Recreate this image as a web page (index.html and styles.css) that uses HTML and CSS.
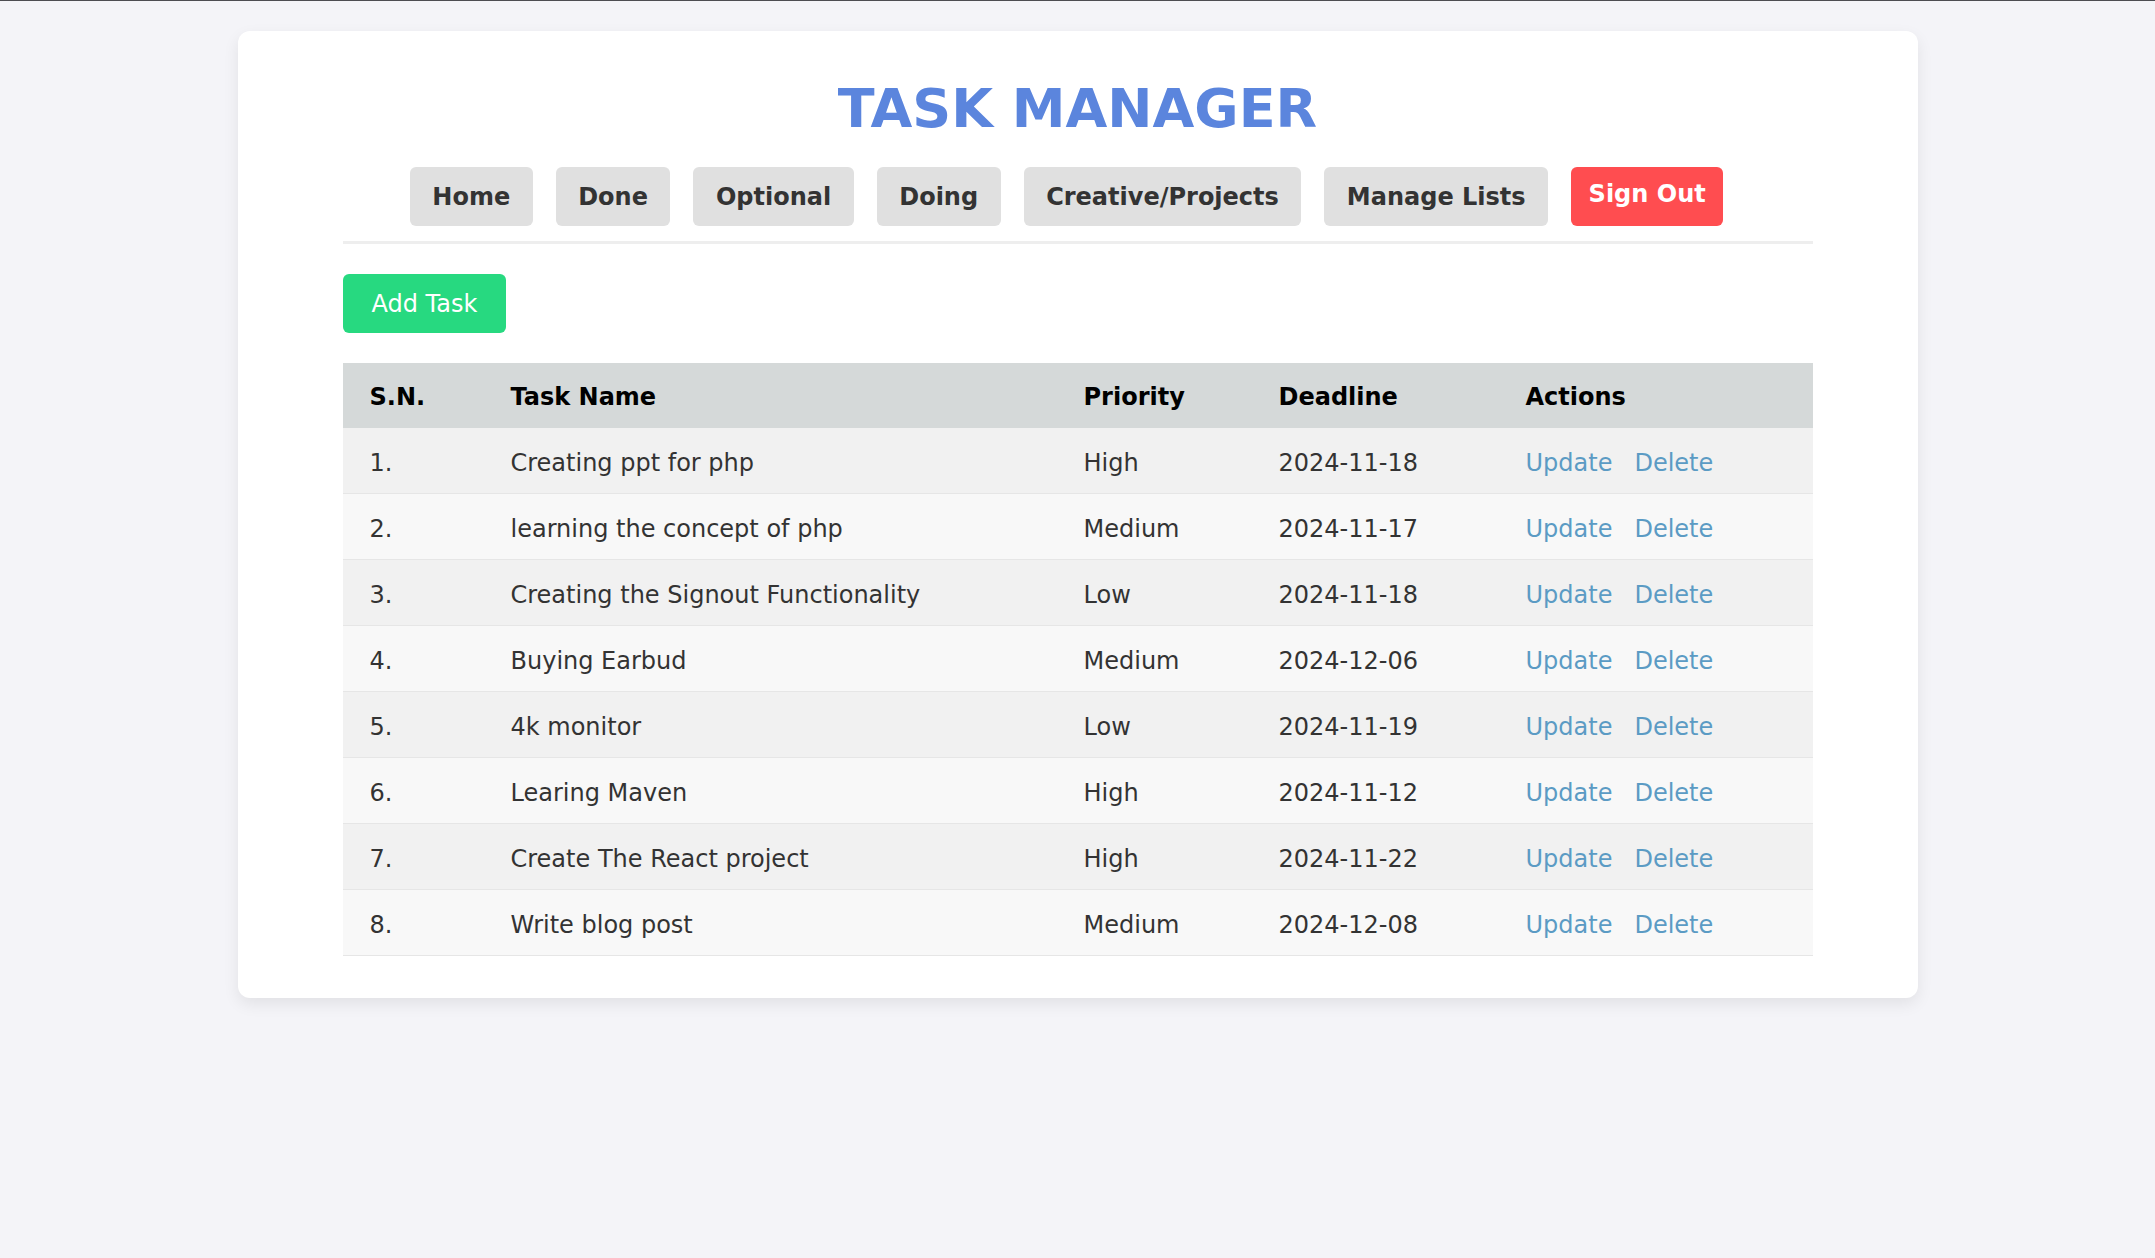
FILE: index.html
```html
<!DOCTYPE html>
<html lang="en">
<head>
<meta charset="utf-8">
<title>Task Manager</title>
<link rel="stylesheet" href="styles.css">
</head>
<body>
<div class="card">
  <h1 class="title">TASK MANAGER</h1>
  <nav class="menu">
    <a class="menu-link" href="#">Home</a>
    <a class="menu-link" href="#">Done</a>
    <a class="menu-link" href="#">Optional</a>
    <a class="menu-link" href="#">Doing</a>
    <a class="menu-link" href="#">Creative/Projects</a>
    <a class="menu-link" href="#">Manage Lists</a>
    <a class="signout" href="#">Sign Out</a>
  </nav>
  <div class="toolbar">
    <a class="add-btn" href="#">Add Task</a>
  </div>
  <table class="tasks">
    <colgroup>
      <col class="c-sn"><col class="c-name"><col class="c-pri"><col class="c-dl"><col class="c-act">
    </colgroup>
    <thead>
      <tr><th>S.N.</th><th>Task Name</th><th>Priority</th><th>Deadline</th><th>Actions</th></tr>
    </thead>
    <tbody>
      <tr><td>1.</td><td>Creating ppt for php</td><td>High</td><td>2024-11-18</td><td><a class="act act-up" href="#">Update</a><a class="act" href="#">Delete</a></td></tr>
      <tr><td>2.</td><td>learning the concept of php</td><td>Medium</td><td>2024-11-17</td><td><a class="act act-up" href="#">Update</a><a class="act" href="#">Delete</a></td></tr>
      <tr><td>3.</td><td>Creating the Signout Functionality</td><td>Low</td><td>2024-11-18</td><td><a class="act act-up" href="#">Update</a><a class="act" href="#">Delete</a></td></tr>
      <tr><td>4.</td><td>Buying Earbud</td><td>Medium</td><td>2024-12-06</td><td><a class="act act-up" href="#">Update</a><a class="act" href="#">Delete</a></td></tr>
      <tr><td>5.</td><td>4k monitor</td><td>Low</td><td>2024-11-19</td><td><a class="act act-up" href="#">Update</a><a class="act" href="#">Delete</a></td></tr>
      <tr><td>6.</td><td>Learing Maven</td><td>High</td><td>2024-11-12</td><td><a class="act act-up" href="#">Update</a><a class="act" href="#">Delete</a></td></tr>
      <tr><td>7.</td><td>Create The React project</td><td>High</td><td>2024-11-22</td><td><a class="act act-up" href="#">Update</a><a class="act" href="#">Delete</a></td></tr>
      <tr><td>8.</td><td>Write blog post</td><td>Medium</td><td>2024-12-08</td><td><a class="act act-up" href="#">Update</a><a class="act" href="#">Delete</a></td></tr>
    </tbody>
  </table>
</div>
</body>
</html>
```
FILE: styles.css
```css
html, body {
  margin: 0;
  padding: 0;
}
body {
  background: #f4f4f8;
  border-top: 1px solid #4d4d52;
  font-family: "DejaVu Sans", Verdana, sans-serif;
  font-size: 24px;
  color: #333;
  min-height: 1257px;
}
.card {
  box-sizing: border-box;
  width: 1680px;
  margin: 30px auto 0;
  padding: 46px 105px 42px;
  background: #fff;
  border-radius: 12px;
  box-shadow: 0 6px 16px rgba(0, 0, 0, 0.08);
}
.title {
  margin: 0 0 3px;
  font-size: 54px;
  line-height: 63px;
  font-weight: bold;
  text-align: center;
  color: #5b85dd;
}
.menu {
  display: flex;
  justify-content: center;
  align-items: flex-start;
  gap: 23px;
  margin-top: 27px;
  padding: 0 22px 15px 0;
  border-bottom: 3px solid #eeeeee;
}
.menu-link {
  display: block;
  padding: 16px 22.5px 14px;
  line-height: 29px;
  font-weight: bold;
  color: #333;
  background: #e0e0e0;
  border-radius: 6px;
  text-decoration: none;
}
.signout {
  display: block;
  padding: 13px 17.5px 17px;
  line-height: 29px;
  font-weight: bold;
  color: #fff;
  background: #ff4d50;
  border-radius: 6px;
  text-decoration: none;
}
.toolbar {
  display: flex;
  margin-top: 30px;
}
.add-btn {
  display: block;
  padding: 16px 29px 14px;
  line-height: 29px;
  color: #fff;
  background: #27d980;
  border-radius: 6px;
  text-decoration: none;
}
.tasks {
  width: 100%;
  margin-top: 30px;
  border-collapse: collapse;
  table-layout: fixed;
}
.c-sn { width: 141px; }
.c-name { width: 573px; }
.c-pri { width: 195px; }
.c-dl { width: 247px; }
.c-act { width: 314px; }
.tasks th,
.tasks td {
  padding: 21px 27px 15px;
  line-height: 29px;
  text-align: left;
  white-space: nowrap;
}
.tasks th {
  padding-top: 20px;
  padding-bottom: 16px;
  background: #d5d9d9;
  color: #000;
  font-weight: bold;
}
.tasks td {
  border-bottom: 1px solid #e6e6e6;
  color: #333;
}
.tasks tbody tr:nth-child(odd) td { background: #f1f1f1; }
.tasks tbody tr:nth-child(even) td { background: #f8f8f8; }
.act {
  color: #5b9bc4;
  text-decoration: none;
}
.act-up {
  margin-right: 22px;
}
```
